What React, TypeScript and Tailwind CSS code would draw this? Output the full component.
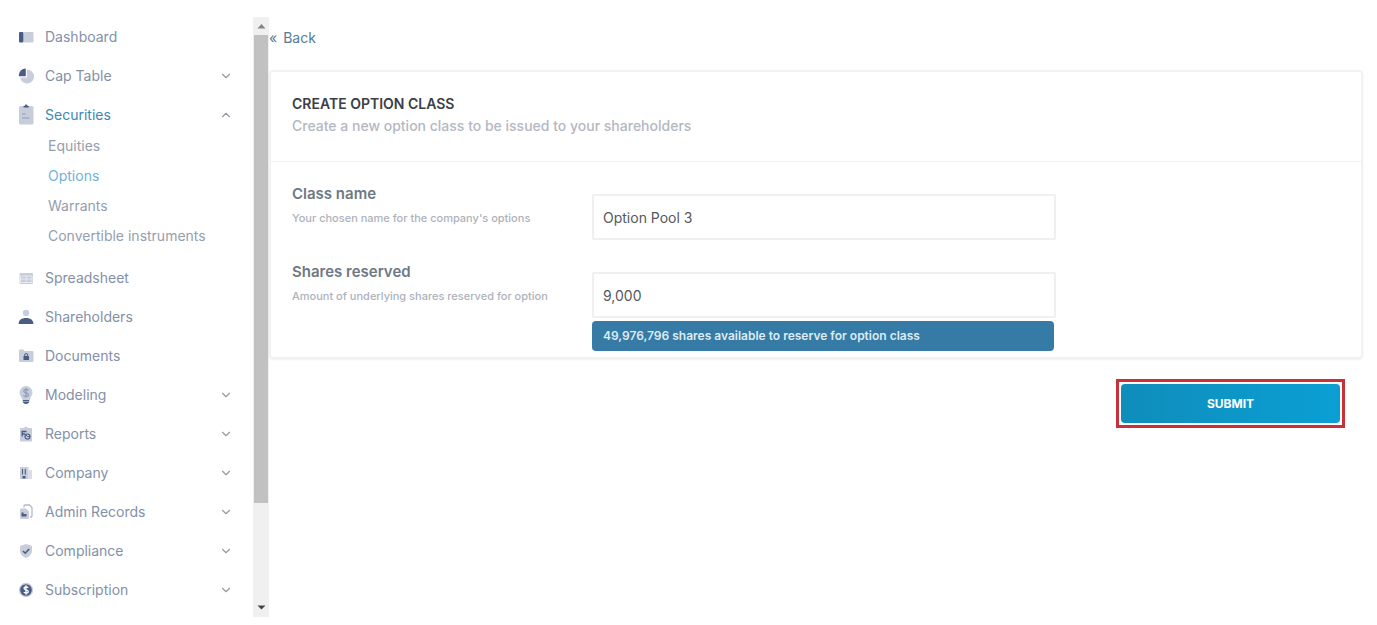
import { useState, type ReactNode } from "react";
import { ChevronDown, ChevronUp } from "lucide-react";

const light = "#c7cddb";
const dark = "#4a5c84";

const icons: Record<string, ReactNode> = {
  Dashboard: (
    <>
      <rect x="1" y="3" width="4.500" height="10.500" rx="1" fill={dark} />
      <rect x="6" y="3" width="9.500" height="10.500" rx="1" fill={light} />
    </>
  ),
  "Cap Table": (
    <>
      <path d="M9 1.500a7 7 0 1 1-6.900 8H9z" fill={light} />
      <path d="M7.800.5v7.700H.8A7 7 0 0 1 7.800.5z" fill={dark} />
    </>
  ),
  Securities: (
    <>
      <rect x="1" y="-1" width="14.500" height="18.500" rx="1.500" fill={light} />
      <path d="M5.500.5v-1.500h1.200a1.400 1.400 0 0 1 2.900 0h1.200V.5z" fill={dark} />
      <path d="M4 7h3.500M4 11h7.500" stroke="#929db5" strokeWidth="1.200" />
    </>
  ),
  Spreadsheet: (
    <>
      <rect x="1.500" y="3" width="13.500" height="11" rx="1" fill={light} />
      <path d="M2.500 6h11.500M2.500 9h11.500M2.500 12.500h11.500M8.200 6v7M2.500 6v7M14 6v7" stroke="#f4f5f8" strokeWidth="0.700" />
    </>
  ),
  Shareholders: (
    <>
      <circle cx="8" cy="4" r="3.200" fill={light} />
      <path d="M.6 15c0-4 3-6 7.400-6s7.400 2 7.400 6z" fill={dark} />
    </>
  ),
  Documents: (
    <>
      <path d="M1 2.500a1 1 0 0 1 1-1h3L6.500 3H14.500a1 1 0 0 1 1 1V13a1 1 0 0 1-1 1H2a1 1 0 0 1-1-1z" fill={light} />
      <rect x="5.500" y="8" width="5.500" height="4" rx=".5" fill={dark} />
      <path d="M6.700 8V7a1.500 1.500 0 0 1 3 0v1" fill="none" stroke={dark} />
    </>
  ),
  Modeling: (
    <>
      <path d="M8-1a6.500 6.500 0 0 0-6.500 6.500c0 3 1.800 4 3 7.500h7c1.200-3.500 3-4.500 3-7.500A6.500 6.500 0 0 0 8-1z" fill={light} />
      <path d="M10.500 3.500C9.500 1.800 5.700 2 5.700 4.100c0 2.400 4.800 1.200 4.800 3.700 0 2.100-4 2.300-5 .4M8 1v9.500" fill="none" stroke="#8f9bb5" strokeWidth="1.200" />
      <path d="M4.800 13h6.400v1.500c0 1.500-1.500 2.500-3.200 2.500s-3.200-1-3.200-2.500z" fill={dark} />
      <path d="M4.800 14.500h6.400" stroke="#c7cddb" strokeWidth=".6" />
    </>
  ),
  Reports: (
    <>
      <path d="M2 2h3.500L8 .5 10.500 2H14v13.500H2z" fill={light} />
      <path d="M3.500 5.500h5M4.200 5.500v5M4.200 8h3" fill="none" stroke={dark} strokeWidth="1.300" />
      <circle cx="9.500" cy="10.500" r="2.500" fill={light} stroke={dark} strokeWidth="1.200" />
      <path d="M9.500 10.500h2.500M9.500 10.500L8 9" stroke={dark} />
    </>
  ),
  Company: (
    <>
      <path d="M2 2h8.500v12H2z" fill={light} />
      <path d="M10.500 5H14v9h-3.500z" fill="#d9dde7" />
      <path d="M4.500 4v5.500M7.300 4v5.500" stroke={dark} strokeWidth="1.100" />
      <rect x="4.500" y="11" width="3" height="2.500" fill={dark} />
    </>
  ),
  "Admin Records": (
    <>
      <path d="M6 3.500V2a1 1 0 0 1 1-1h4.500L14 3.500V12a1 1 0 0 1-1 1h-1" fill="none" stroke="#b3bbcd" strokeWidth="1.300" />
      <path d="M3 4.500h5l3 3V14a1 1 0 0 1-1 1H3a1 1 0 0 1-1-1V5.500a1 1 0 0 1 1-1z" fill={light} />
      <path d="M3.500 8.500h2V10h3v2.500h-5z" fill={dark} />
    </>
  ),
  Compliance: (
    <>
      <path d="M8 1l6 2v4.500c0 3.500-2.500 6-6 7.500-3.500-1.500-6-4-6-7.500V3z" fill={light} />
      <path d="M5 8l2.200 2.200L11.200 6" fill="none" stroke={dark} strokeWidth="1.600" />
    </>
  ),
  Subscription: (
    <>
      <circle cx="8" cy="8" r="6.500" fill={dark} stroke={light} strokeWidth="1.300" />
      <path d="M10.200 5.800C9.300 4.500 6 4.600 6 6.300c0 1.900 4.300 1.300 4.300 3.400 0 1.700-3.500 1.800-4.500.3M8 3.300v9.400" fill="none" stroke="#fff" strokeWidth="1.300" />
    </>
  ),
};

const securities = ["Equities", "Options", "Warrants", "Convertible instruments"];

function NavItem({ label, expandable, open }: { label: string; expandable?: boolean; open?: boolean }) {
  return (
    <a
      href="#"
      className={`flex h-[39px] items-center pl-[18px] pr-5 text-sm ${open ? "text-[#3d87b5]" : "text-[#8490a8]"}`}
    >
      <svg viewBox="0 0 16 16" className="mr-[11px] size-4 shrink-0 overflow-visible" aria-hidden="true">
        {icons[label]}
      </svg>
      <span className="grow">{label}</span>
      {expandable && !open && <ChevronDown size={14} strokeWidth={2} className="text-[#939aa8]" />}
      {open && <ChevronUp size={14} strokeWidth={2} className="text-[#939aa8]" />}
    </a>
  );
}

function Sidebar() {
  return (
    <nav className="w-[253px] shrink-0 pb-2">
      <NavItem label="Dashboard" />
      <NavItem label="Cap Table" expandable />
      <NavItem label="Securities" expandable open />
      <ul className="mb-2.5 flex flex-col gap-1.5 pl-12 text-sm">
        {securities.map((item) => (
          <li key={item} className="h-6 leading-6">
            <a href="#" className={item === "Options" ? "text-[#70b2d6]" : "text-[#959eae]"}>
              {item}
            </a>
          </li>
        ))}
      </ul>
      <NavItem label="Spreadsheet" />
      <NavItem label="Shareholders" />
      <NavItem label="Documents" />
      <NavItem label="Modeling" expandable />
      <NavItem label="Reports" expandable />
      <NavItem label="Company" expandable />
      <NavItem label="Admin Records" expandable />
      <NavItem label="Compliance" expandable />
      <NavItem label="Subscription" expandable />
    </nav>
  );
}

function Scrollbar() {
  return (
    <div className="flex w-4 shrink-0 flex-col items-center bg-[#f0f0f0]" aria-hidden="true">
      <svg viewBox="0 0 16 18" className="h-[18px] w-4 shrink-0">
        <path d="M4.500 11.500L8.500 7l4 4.500z" fill="#858585" />
      </svg>
      <div className="h-[78%] w-3.5 bg-[#c1c1c1]" />
      <svg viewBox="0 0 16 18" className="mt-auto h-[18px] w-4 shrink-0">
        <path d="M4.500 6.500h8l-4 4z" fill="#444" />
      </svg>
    </div>
  );
}

export default function App() {
  const [className, setClassName] = useState("Option Pool 3");
  const [shares, setShares] = useState("9,000");

  return (
    <div className="flex bg-white pt-[17px] font-['Inter',sans-serif]">
      <Sidebar />
      <Scrollbar />

      <main className="min-w-0 grow pr-3.5">
        <a href="#" className="flex h-[42px] items-center gap-1.5 text-sm text-[#527d94]">
          <span>«</span>
          <span>Back</span>
        </a>

        <form onSubmit={(e) => e.preventDefault()}>
          {/* Option class card */}
          <section className="mt-[11px] rounded border-2 border-[#f2f2f2] pb-1.5 shadow-sm shadow-black/5">
            <header className="h-[90px] border-b border-[#f0f0f0] px-[21px] pt-[22px]">
              <h1 className="text-sm font-semibold text-[#3b3e43]">CREATE OPTION CLASS</h1>
              <p className="text-sm font-medium leading-6 text-[#b3b8c2]">
                Create a new option class to be issued to your shareholders
              </p>
            </header>

            <div className="grid grid-cols-[300px_minmax(0,464px)] gap-y-8 px-[21px] pt-8">
              <div className="-mt-2">
                <label htmlFor="class-name" className="block text-[15px] font-semibold leading-4 text-[#6e7885]">
                  Class name
                </label>
                <p className="mt-1 text-[11px] font-medium leading-6 text-[#adb2bb]">
                  Your chosen name for the company's options
                </p>
              </div>
              <input
                id="class-name"
                value={className}
                onChange={(e) => setClassName(e.target.value)}
                className="h-[46px] w-full rounded-xs border-2 border-[#f0f0f0] px-[9px] text-sm text-[#55585d] outline-none"
              />

              <div className="-mt-2">
                <label htmlFor="shares" className="block text-[15px] font-semibold leading-4 text-[#6e7885]">
                  Shares reserved
                </label>
                <p className="mt-1 text-[11px] font-medium leading-6 text-[#adb2bb]">
                  Amount of underlying shares reserved for option
                </p>
              </div>
              <div>
                <input
                  id="shares"
                  value={shares}
                  onChange={(e) => setShares(e.target.value)}
                  className="h-[46px] w-full rounded-xs border-2 border-[#f0f0f0] px-[9px] text-sm text-[#55585d] outline-none"
                />
                <p className="mr-0.5 mt-[3px] rounded bg-[#357ba6] px-[11px] text-xs font-semibold leading-[30px] text-[#dcebf4]">
                  49,976,796 shares available to reserve for option class
                </p>
              </div>
            </div>
          </section>

          <div className="mr-[18px] mt-5 flex justify-end">
            <div className="border-[3px] border-[#c8313a] p-0.5">
              <button
                type="submit"
                className="h-[39px] w-[219px] rounded bg-linear-to-r from-[#0f8dbb] to-[#0a9fd4] text-xs font-bold text-white"
              >
                SUBMIT
              </button>
            </div>
          </div>
        </form>
      </main>
    </div>
  );
}
